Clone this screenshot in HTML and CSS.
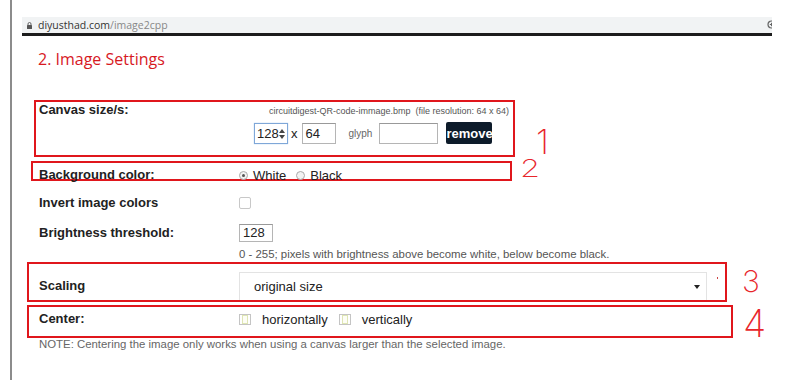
FILE: index.html
```html
<!DOCTYPE html>
<html lang="en">
<head>
  <meta charset="UTF-8" />
  <title>image2cpp - Image Settings</title>
  <link rel="stylesheet" href="styles.css">
</head>
<body>
  <div class="window">

    <div class="urlbar">
      <svg class="lock" width="5" height="7" viewBox="0 0 5 7"><path d="M1 3V2a1.5 1.5 0 0 1 3 0v1" fill="none" stroke="#555" stroke-width="0.9"/><rect x="0" y="3" width="5" height="4" rx="0.5" fill="#555"/></svg>
      <span class="host">diyusthad.com</span><span class="path">/image2cpp</span>
      <svg class="zoom-icon" width="9" height="9" viewBox="0 0 9 9"><circle cx="4.5" cy="4.5" r="3.5" fill="none" stroke="#666" stroke-width="1.2"/><path d="M2.8 4.5h3.4M4.5 2.8v3.4" stroke="#666" stroke-width="1"/></svg>
    </div>

    <h2 class="section-title">2. Image Settings</h2>

    <div class="settings">

      <div class="row boxed box-canvas">
        <div class="label">Canvas size/s:</div>
        <div class="value">
          <div class="file-info">circuitdigest-QR-code-immage.bmp&nbsp; (file resolution: 64 x 64)</div>
          <div class="size-inputs">
            <div class="field num focused">128<span class="spin"><i class="up"></i><i class="down"></i></span></div>
            <span class="times">x</span>
            <div class="field num">64</div>
            <span class="glyph-label">glyph</span>
            <div class="field glyph"></div>
            <button class="remove">remove</button>
          </div>
        </div>
        <span class="mark mark-1">1</span>
      </div>

      <div class="row boxed box-bg">
        <div class="label">Background color:</div>
        <div class="value radios">
          <span class="radio checked"></span><span class="opt">White</span>
          <span class="radio"></span><span class="opt">Black</span>
        </div>
        <span class="mark mark-2">2</span>
      </div>

      <div class="row plain row-invert">
        <div class="label">Invert image colors</div>
        <span class="checkbox"></span>
      </div>

      <div class="row plain row-bright">
        <div class="label">Brightness threshold:</div>
        <div class="field small">128</div>
      </div>
      <div class="help">0 - 255; pixels with brightness above become white, below become black.</div>

      <div class="row boxed box-scale">
        <div class="label">Scaling</div>
        <div class="select">original size<span class="arrow"></span></div>
        <span class="dot"></span>
        <span class="mark mark-3">3</span>
      </div>

      <div class="row boxed box-center">
        <div class="label">Center:</div>
        <span class="checkbox old"></span><span class="opt">horizontally</span>
        <span class="checkbox old"></span><span class="opt">vertically</span>
        <span class="mark mark-4">4</span>
      </div>
      <div class="note">NOTE: Centering the image only works when using a canvas larger than the selected image.</div>

    </div>
  </div>
</body>
</html>
```

FILE: styles.css
```css
body { margin: 0; background: #fff; color: #222; font-family: "Liberation Sans", Arial, sans-serif; }

.window { margin-left: 10px; border-left: 2px solid #8c8c8c; height: 380px; overflow: hidden; }

/* browser address bar */
.urlbar { position: relative; display: flex; align-items: center; margin: 17px 0 0 10px; width: 750px; height: 19px; padding-left: 5px; box-sizing: border-box; background: #f1f3f4; border-bottom: 3px solid #1c1c1c; overflow: hidden; font-family: "Open Sans", sans-serif; font-size: 10.5px; }
.urlbar .lock { margin-right: 6px; }
.urlbar .host { color: #333; }
.urlbar .path { color: #888; }
.urlbar .zoom-icon { position: absolute; right: -4px; top: 3px; }

.section-title { margin: 13px 0 0 26px; font-family: "Open Sans", sans-serif; font-size: 16px; line-height: 20px; font-weight: normal; color: #d7191f; }

/* rows */
.row { position: relative; display: flex; box-sizing: border-box; }
.label { width: 200px; flex: none; font-size: 13px; font-weight: bold; line-height: 16px; color: #222; }
.opt { font-size: 13px; color: #222; }
.boxed { border: 2px solid #e0161c; }
.plain { padding-left: 27px; align-items: center; }

.box-canvas { margin: 31px 0 0 22px; width: 481px; height: 57px; padding-left: 3px; align-items: flex-start; }
.file-info { margin: 2px 0 0 30px; font-size: 9px; line-height: 14px; color: #555; white-space: nowrap; }
.size-inputs { display: flex; align-items: center; margin: 4px 0 0 15px; white-space: nowrap; }
.field { flex: none; box-sizing: border-box; height: 21px; border: 1px solid #b5b5b5; border-top-color: #999; background: #fff; font-size: 13px; line-height: 19px; padding-left: 3px; color: #222; }
.field.num { width: 34px; position: relative; }
.field.focused { border-color: #7fa7d8; box-shadow: 0 0 1px #9cc0ea; padding-left: 2px; }
.spin { position: absolute; right: 2px; top: 5px; display: flex; flex-direction: column; gap: 2px; }
.spin i { width: 0; height: 0; border-left: 3px solid transparent; border-right: 3px solid transparent; }
.spin .up { border-bottom: 4px solid #444; }
.spin .down { border-top: 4px solid #444; }
.times { font-size: 13px; margin: 0 4px 0 3px; color: #222; }
.glyph-label { font-size: 10px; color: #666; margin: 0 7px 0 13px; }
.field.glyph { width: 59px; }
.remove { flex: none; margin-left: 8px; height: 22px; width: 46px; padding: 0; border: none; border-radius: 2px; background: #0d1b2a; color: #fff; font-family: "Liberation Sans", Arial, sans-serif; font-size: 13px; font-weight: bold; }

.box-bg { margin: 4px 0 0 19px; width: 481px; height: 20px; padding: 4px 0 0 6px; align-items: flex-start; }
.radios { display: flex; align-items: center; height: 16px; }
.radio { box-sizing: border-box; width: 9px; height: 9px; border: 1px solid #aaa; border-radius: 50%; background: #f2f2f2; margin-right: 5px; display: flex; align-items: center; justify-content: center; }
.radio.checked::after { content: ""; width: 3px; height: 3px; border-radius: 50%; background: #555; }
.radios .opt + .radio { margin-left: 10px; }

.checkbox { box-sizing: border-box; width: 12px; height: 12px; border: 1px solid #c8c8c8; border-radius: 2px; background: #fff; }
.checkbox.old { width: 12px; height: 11px; border-color: #c4c4c4; border-radius: 0; display: flex; align-items: center; justify-content: center; margin-right: 11px; }
.checkbox.old::after { content: ""; width: 4px; height: 7px; border: 1px solid #dfe6b4; background: #fdfef6; }
.checkbox.old + .opt { margin-right: 11px; }

.row-invert { margin-top: 12px; height: 20px; }
.row-bright { margin-top: 11px; height: 18px; }
.field.small { width: 34px; height: 18px; font-size: 13px; line-height: 16px; }
.help { margin-top: 5px; padding-left: 227px; font-size: 11.4px; line-height: 14px; color: #555; }

.box-scale { margin: 1px 0 0 15px; width: 700px; height: 40px; padding-left: 10px; align-items: flex-end; }
.box-scale .label { line-height: 28px; }
.select { position: relative; box-sizing: border-box; width: 468px; height: 28px; border: 1px solid #e3e3e3; border-bottom: none; padding-left: 14px; font-size: 13px; line-height: 27px; color: #222; }
.select .arrow { position: absolute; right: 6px; top: 12px; width: 0; height: 0; border-left: 3px solid transparent; border-right: 3px solid transparent; border-top: 4px solid #222; }
.dot { position: absolute; left: 688px; top: 13px; width: 1px; height: 2px; background: #c44; }

.box-center { margin: 3px 0 0 15px; width: 706px; height: 33px; padding: 0 0 5px 10px; align-items: center; }
.note { margin-top: -1px; padding-left: 27px; font-size: 11.4px; line-height: 14px; color: #666; }

/* hand drawn callout numbers */
.mark { position: absolute; font-family: Inter, Roboto, sans-serif; font-weight: 200; line-height: 1; color: #e8262b; }
.mark-1 { left: 500px; top: 23px; font-size: 34px; }
.mark-2 { left: 487px; top: -7px; font-size: 25px; transform: scaleX(1.3); transform-origin: left; }
.mark-3 { left: 713px; top: 2px; font-size: 30px; }
.mark-4 { left: 714px; top: -3px; font-size: 38px; }
```
